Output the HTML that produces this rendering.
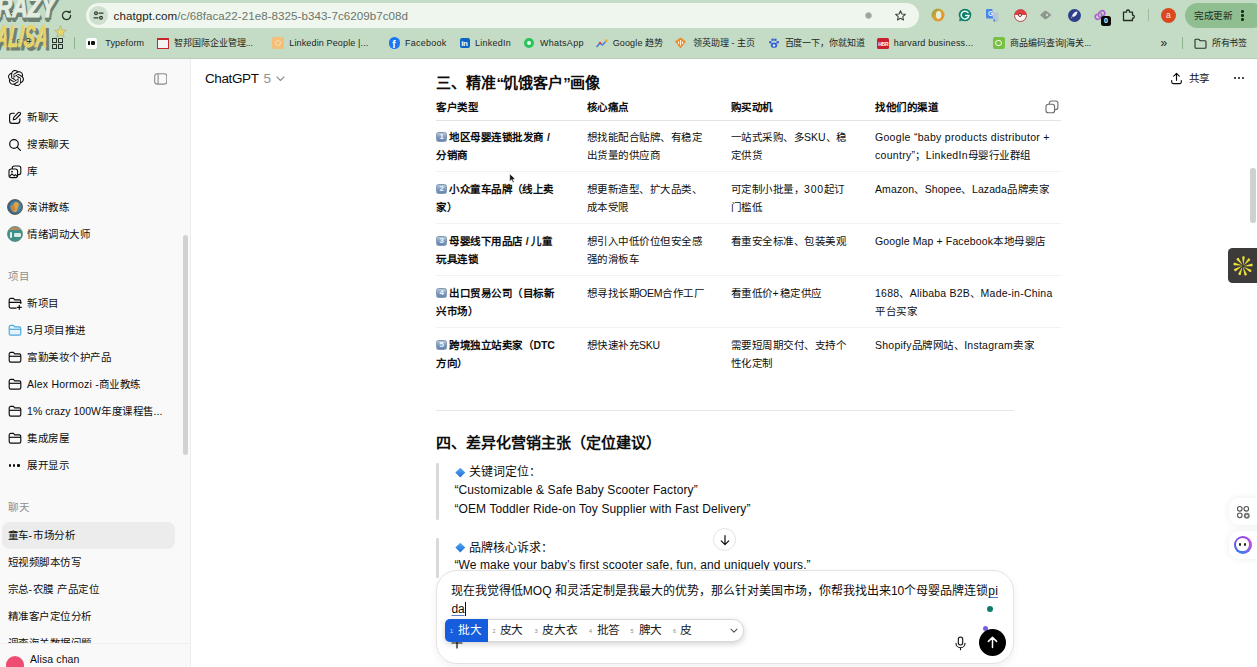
<!DOCTYPE html>
<html lang="zh-CN">
<head>
<meta charset="utf-8">
<title>ChatGPT</title>
<style>
*{box-sizing:border-box;margin:0;padding:0}
html,body{width:1257px;height:667px;overflow:hidden;background:#fff}
body{font-family:"Liberation Sans",sans-serif;color:#0d0d0d;position:relative}
.abs{position:absolute}
.t{position:absolute;white-space:nowrap;color:#0d0d0d}
#chrome{position:absolute;left:0;top:0;width:1257px;height:58.5px;background:#c4dcc5;overflow:hidden}
#chrome .edge{position:absolute;left:0;top:57.5px;width:1257px;height:1px;background:#bccdb9}
#omni{position:absolute;left:86px;top:3px;width:832.5px;height:25px;border-radius:12.5px;background:#eff6ee}
#omni .site{position:absolute;left:3px;top:3px;width:19px;height:19px;border-radius:50%;background:#cfe0ce}
.wm1{position:absolute;left:-19.5px;top:-8.5px;font-size:30px;line-height:30px;font-weight:700;font-style:italic;color:#e3eee3;-webkit-text-stroke:1.1px #e3eee3;transform-origin:0 0;transform:scaleX(.72);text-shadow:1px 1px 0 #6e8172,2px 2px 0 #6e8172,3px 3px 0 #6e8172,0 4px 0 #6e8172,1px 5px 0 #6e8172,-1px 3px 0 #6e8172;white-space:nowrap}
.wm2,.wm2s{position:absolute;left:-3px;top:21px;font-size:31px;line-height:31px;font-weight:700;font-style:italic;color:#e6d468;-webkit-text-stroke:.6px #e6d468;transform-origin:0 0;transform:scaleX(.56) skewX(-8deg);white-space:nowrap}
.wm2s{left:0px;top:24px;color:#6e8172;-webkit-text-stroke:1.2px #6e8172}
#side{position:absolute;left:0;top:58.5px;width:190.5px;height:609px;background:#f9f9f9;border-right:1px solid #ededed}
#main{position:absolute;left:190.5px;top:58.5px;width:1067px;height:609px;background:#fff}
</style>
</head>
<body>
<div id="chrome">
<svg class="abs" style="left:5px;top:9px" width="12" height="12" viewBox="0 0 12 12"><path d="M7.5 2 L3 6 L7.5 10 M3 6 H11" fill="none" stroke="#3a463a" stroke-width="1.3"/></svg>
<div class="t" style="left:15.5px;top:37.2px;font-size:9px;line-height:12px;color:#1d261e;">应用</div>
<div class="abs" style="left:5px;top:38.5px;width:9px;height:0;border-top:1.5px dashed #d6452f"></div>
<div class="wm1">CRAZY</div><div class="wm2s">ALISA</div><div class="wm2">ALISA</div>
<svg class="abs" style="left:54px;top:25px" width="13" height="13" viewBox="0 0 24 24"><path d="M12 1.5l3 7.6 8 .5-6.2 5.1 2.1 7.8L12 18.2 5.1 22.5l2.1-7.8L1 9.6l8-.5z" fill="#e6d66e" stroke="#9aa878" stroke-width="1"/></svg>
<svg class="abs" style="left:60px;top:9px" width="13" height="13" viewBox="0 0 13 13"><path d="M10.6 6.5a4.1 4.1 0 1 1-1.3-3" fill="none" stroke="#27332a" stroke-width="1.3" stroke-linecap="round"/><path d="M7.6 3.9h3.1V.9z" fill="#27332a"/></svg>
<div id="omni"><div class="site"></div><svg class="abs" style="left:7px;top:7px" width="11" height="11" viewBox="0 0 11 11"><g fill="none" stroke="#2d392f" stroke-width="1.2" stroke-linecap="round"><circle cx="3" cy="3.2" r="1.4"/><path d="M6 3.2h4"/><circle cx="8" cy="7.8" r="1.4"/><path d="M1 7.8h4"/></g></svg></div>
<div class="t" style="left:113.6px;top:8px;font-size:11.6px;line-height:15px;letter-spacing:0.05px;color:#6b756b"><span style="color:#1d261e">chatgpt.com</span>/c/68faca22-21e8-8325-b343-7c6209b7c08d</div>
<div class="abs" style="left:865px;top:11.5px;width:7px;height:7px;border-radius:50%;background:#9aa39a;border:1.5px solid #b7c2b7"></div>
<svg class="abs" style="left:894px;top:8.7px" width="13" height="13" viewBox="0 0 24 24"><path d="M12 3.2l2.600 5.9 6.4.6-4.8 4.3 1.4 6.3L12 17l-5.6 3.3 1.4-6.3L3 9.7l6.400-.6z" fill="none" stroke="#38443a" stroke-width="1.9" stroke-linejoin="round"/></svg>
<svg class="abs" style="left:931px;top:8.3px" width="14" height="14" viewBox="-7 -7 14 14"><defs><linearGradient id="og" x1="0" y1="0" x2="1" y2="1"><stop offset="0" stop-color="#7fa23c"/><stop offset=".45" stop-color="#d9a233"/><stop offset="1" stop-color="#ee8f2c"/></linearGradient></defs><circle r="6.5" fill="url(#og)"/><ellipse cx=".6" cy="0" rx="2.7" ry="3.9" fill="#e6eedd"/></svg>
<svg class="abs" style="left:958px;top:8.3px" width="14" height="14" viewBox="-7 -7 14 14"><circle r="6.3" fill="#117f69"/><path d="M-6 3.5l.6 3 2.6-1.2z" fill="#117f69"/><path d="M3 -2.5A3.900 3.9 0 1 0 3.9 .6H.6" fill="none" stroke="#eafaf4" stroke-width="1.5" stroke-linecap="round"/></svg>
<svg class="abs" style="left:985px;top:8px" width="15" height="15" viewBox="0 0 15 15"><path d="M1 2.2a1.200 1.2 0 0 1 1.2-1.2h5l1.800 9.5H2.200A1.200 1.2 0 0 1 1 9.3z" fill="#4a84ea"/><path d="M6.500 4.5h5.800a1.200 1.2 0 0 1 1.2 1.2v6.600a1.200 1.2 0 0 1-1.2 1.2H9.200z" fill="#b9c6d6"/><path d="M9 10.5l1.500 3-2.2-.2z" fill="#3a6fd0"/></svg>
<div class="t" style="left:988px;top:9.8px;font-size:6.5px;line-height:8px;font-weight:700;color:#e9f1ff">G</div>
<div class="abs" style="left:1013.5px;top:8.5px;width:13px;height:13px;border-radius:50%;background:linear-gradient(#e33d3d 0 50%,#f4f4f4 50% 100%);border:.5px solid #b44"></div>
<div class="abs" style="left:1018px;top:13px;width:4px;height:4px;border-radius:50%;background:#fff;border:.8px solid #733"></div>
<svg class="abs" style="left:1039px;top:9px" width="14" height="12" viewBox="0 0 14 12"><path d="M1 6l5-4.5 2.5 1.2L12.5 6 8.5 9.3 6 10.5z" fill="#8e978e"/><circle cx="8" cy="6" r="1.2" fill="#c4dcc5"/></svg>
<div class="abs" style="left:1067.5px;top:8.5px;width:13px;height:13px;border-radius:50%;background:#2c3f8a;"></div>
<svg class="abs" style="left:1069px;top:10px" width="10" height="10" viewBox="0 0 10 10"><path d="M8.5 1.5C6 1.6 3.8 3.2 3 6l1 1c2.8-.8 4.4-3 4.5-5.5z" fill="#eef2ff"/><path d="M2.600 6.5L1.500 8.5l2-1z" fill="#f1b13a"/></svg>
<svg class="abs" style="left:1093px;top:8px" width="14" height="14" viewBox="0 0 14 14"><g fill="none" stroke="#b05fcf" stroke-width="1.7" stroke-linecap="round"><path d="M6 8.5a2.600 2.6 0 0 1 0-3.6l1.800-1.8a2.600 2.6 0 0 1 3.6 3.6l-.8.8"/><path d="M8 5.5a2.600 2.6 0 0 1 0 3.6l-1.8 1.8a2.600 2.6 0 0 1-3.6-3.6l.8-.8"/></g></svg>
<div class="abs" style="left:1101px;top:16px;width:10px;height:10px;border-radius:2.5px;background:#0b0b0b;color:#fff;font-size:7px;line-height:10px;text-align:center;font-weight:700">0</div>
<svg class="abs" style="left:1121px;top:8px" width="14" height="14" viewBox="0 0 14 14"><path d="M2.500 4.2h3v-.7a1.500 1.5 0 0 1 3 0v.7h3v3h.3a1.500 1.5 0 0 1 0 3h-.3v2.300h-9z" fill="none" stroke="#222b23" stroke-width="1.3" stroke-linejoin="round"/></svg>
<div class="abs" style="left:1148px;top:9px;width:1px;height:12px;background:#9dbb9d"></div>
<div class="abs" style="left:1161px;top:7.5px;width:15px;height:15px;border-radius:50%;background:#d9481f;"></div>
<div class="t" style="left:1166px;top:9.5px;font-size:8.5px;line-height:10px;color:#ffe9df">a</div>
<div class="abs" style="left:1185px;top:3px;width:80px;height:25px;border-radius:12.5px;background:#8fbf90"></div>
<div class="t" style="left:1194px;top:9px;font-size:9.6px;line-height:13px;color:#1c2a1c;letter-spacing:-0.4px;">完成更新</div>
<div class="abs" style="left:1241.2px;top:10.2px;width:2.4px;height:2.4px;border-radius:50%;background:#1c2a1c"></div><div class="abs" style="left:1241.2px;top:14.3px;width:2.4px;height:2.4px;border-radius:50%;background:#1c2a1c"></div><div class="abs" style="left:1241.2px;top:18.4px;width:2.4px;height:2.4px;border-radius:50%;background:#1c2a1c"></div>
<div class="abs" style="left:52px;top:38px;width:4.5px;height:4.5px;border:1px solid #27332a;border-radius:.5px"></div><div class="abs" style="left:52px;top:44px;width:4.5px;height:4.5px;border:1px solid #27332a;border-radius:.5px"></div><div class="abs" style="left:58px;top:38px;width:4.5px;height:4.5px;border:1px solid #27332a;border-radius:.5px"></div><div class="abs" style="left:58px;top:44px;width:4.5px;height:4.5px;border:1px solid #27332a;border-radius:.5px"></div>
<div class="abs" style="left:74px;top:37px;width:1px;height:12px;background:#8db38d"></div>
<div class="abs" style="left:86px;top:37.5px;width:11px;height:11px;border-radius:2.5px;background:#fbfdfb"></div><div class="abs" style="left:88.3px;top:41px;width:1.6px;height:4px;border-radius:.6px;background:#111"></div><div class="abs" style="left:90.6px;top:41px;width:4.6px;height:4px;border-radius:1.2px;background:#111"></div>
<div class="t" style="left:105.2px;top:37.2px;font-size:9px;line-height:12px;color:#1d261e;letter-spacing:0.2px;">Typeform</div>
<div class="abs" style="left:157px;top:37.5px;width:11.5px;height:11px;border:1.6px solid #c5282a;border-top-width:2.4px;background:#f2f5f1"></div>
<div class="t" style="left:173.7px;top:37.2px;font-size:9px;line-height:12px;color:#1d261e;">智邦国际企业管理<span style="letter-spacing:-0.07px">...</span></div>
<div class="abs" style="left:272px;top:37px;width:12px;height:12px;border-radius:2px;background:#f3bf79"></div><div class="abs" style="left:275px;top:40px;width:6px;height:6px;border-radius:50%;border:1px solid #f8dcae"></div>
<div class="t" style="left:289.3px;top:37.2px;font-size:9px;line-height:12px;color:#1d261e;letter-spacing:0.14px;">Linkedin People |...</div>
<div class="abs" style="left:388.8px;top:37.4px;width:11.2px;height:11.2px;border-radius:50%;background:#1877f2;"></div>
<div class="t" style="left:392.3px;top:38.5px;font-size:10px;line-height:11px;font-weight:700;color:#fff">f</div>
<div class="t" style="left:405px;top:37.2px;font-size:9px;line-height:12px;color:#1d261e;letter-spacing:0.23px;">Facebook</div>
<div class="abs" style="left:459.6px;top:37.8px;width:10.5px;height:10.5px;border-radius:2px;background:#0a66c2"></div><div class="t" style="left:461.2px;top:39px;font-size:8px;line-height:9px;font-weight:700;color:#fff;letter-spacing:-.3px">in</div>
<div class="t" style="left:475px;top:37.2px;font-size:9px;line-height:12px;color:#1d261e;letter-spacing:0.23px;">LinkedIn</div>
<div class="abs" style="left:523.9px;top:37.7px;width:10.6px;height:10.6px;border-radius:50%;background:#27c45a;"></div>
<div class="abs" style="left:526.9px;top:40.7px;width:4.6px;height:4.6px;border-radius:50%;background:#e9f9ee;"></div>
<div class="t" style="left:540px;top:37.2px;font-size:9px;line-height:12px;color:#1d261e;letter-spacing:0.27px;">WhatsApp</div>
<svg class="abs" style="left:596px;top:37px" width="12" height="12" viewBox="0 0 12 12"><path d="M1 9.5l3-3.5 2.5 2 4-4.5" fill="none" stroke="#4a7de0" stroke-width="1.6" stroke-linecap="round"/><circle cx="4" cy="6" r="1.3" fill="#e8453c"/><circle cx="10.3" cy="3.6" r="1.3" fill="#f2b61f"/></svg>
<div class="t" style="left:612.7px;top:37.2px;font-size:9px;line-height:12px;color:#1d261e;letter-spacing:0.14px;">Google <span style="letter-spacing:0px">趋势</span></div>
<svg class="abs" style="left:674px;top:37px" width="13" height="12" viewBox="0 0 13 12"><path d="M6.500.5l5.500 4-5.5 7-5.5-7z" fill="#f08a24"/><path d="M6.500 3v5.500M4.500 4.5v2.500M8.500 4.5v2.500" stroke="#fff2dc" stroke-width="1.1"/></svg>
<div class="t" style="left:693px;top:37.2px;font-size:9px;line-height:12px;color:#1d261e;">领英助理 - 主页</div>
<svg class="abs" style="left:767.5px;top:37px" width="12" height="12" viewBox="0 0 12 12"><g fill="#3460d6"><ellipse cx="6" cy="8.2" rx="3.2" ry="2.6"/><circle cx="2.3" cy="5.2" r="1.3"/><circle cx="4.6" cy="2.8" r="1.3"/><circle cx="7.4" cy="2.8" r="1.3"/><circle cx="9.7" cy="5.2" r="1.3"/></g><circle cx="6" cy="8.4" r="1.2" fill="#e8eefc"/></svg>
<div class="t" style="left:784.5px;top:37.2px;font-size:9px;line-height:12px;color:#1d261e;letter-spacing:-0.11px;">百度一下，你就知道</div>
<div class="abs" style="left:877px;top:37.5px;width:12px;height:11px;border-radius:1.5px;background:#c8202f"></div><div class="t" style="left:878.2px;top:40.5px;font-size:5px;line-height:6px;font-weight:700;color:#fff;letter-spacing:-.2px">HBR</div>
<div class="t" style="left:893.7px;top:37.2px;font-size:9px;line-height:12px;color:#1d261e;letter-spacing:0.19px;">harvard business...</div>
<div class="abs" style="left:992.6px;top:37.3px;width:12px;height:11.5px;border-radius:2px;background:#78c043"></div><div class="abs" style="left:995px;top:39.5px;width:6.5px;height:6.5px;border-radius:50%;border:1.5px solid #f3fbe9"></div>
<div class="t" style="left:1010px;top:37.2px;font-size:9px;line-height:12px;color:#1d261e;">商品编码查询<span style="letter-spacing:-0.21px">|</span>海关<span style="letter-spacing:-0.21px">...</span></div>
<div class="t" style="left:1160.5px;top:36.5px;font-size:12px;line-height:12px;color:#1d261e;">»</div>
<div class="abs" style="left:1181.5px;top:37px;width:1px;height:12px;background:#8db38d"></div>
<svg class="abs" style="left:1193.5px;top:37.5px" width="13" height="11" viewBox="0 0 13 11"><path d="M1 2.2a1 1 0 0 1 1-1h2.800l1.300 1.5H11a1 1 0 0 1 1 1v5.600a1 1 0 0 1-1 1H2a1 1 0 0 1-1-1z" fill="none" stroke="#27332a" stroke-width="1.1"/></svg>
<div class="t" style="left:1211.6px;top:37.2px;font-size:9px;line-height:12px;color:#1d261e;letter-spacing:-0.05px;">所有书签</div>
<div class="edge"></div>
</div>
<div id="side"></div>
<svg class="abs" style="left:7.5px;top:70px" width="16" height="16" viewBox="0 0 24 24"><path d="M22.2819 9.82a5.9847 5.98 0 0 0-.5157-4.91 6.05 6.05 0 0 0-6.51-2.9A6.0651 6.07 0 0 0 4.98 4.18a5.9847 5.98 0 0 0-4 2.9 6.05 6.05 0 0 0 .7427 7.1 5.98 5.98 0 0 0 .511 4.91 6.05 6.05 0 0 0 6.51 2.9A5.9847 5.98 0 0 0 13.26 24a6.0557 6.06 0 0 0 5.77-4.21 5.99 5.99 0 0 0 4-2.9 6.06 6.06 0 0 0-.7475-7.07zm-9.02 12.61a4.4755 4.48 0 0 1-2.88-1.04l.1419-.0804 4.78-2.76a.7948.79 0 0 0 .3927-.6813v-6.74l2.02 1.17a.71.07 0 0 1 .38.05v5.5826a4.504 4.5 0 0 1-4.49 4.49zm-9.66-4.13a4.4708 4.47 0 0 1-.5346-3.01l.142.09 4.78 2.76a.7712.77 0 0 0 .7806 0l5.8428-3.37v2.3324a.804.08 0 0 1-.332.06L9.74 19.95a4.4992 4.5 0 0 1-6.14-1.65zM2.3408 7.9a4.485 4.49 0 0 1 2.37-1.97V11.6a.7664.77 0 0 0 .3879.68l5.8144 3.35-2.02 1.17a.757.08 0 0 1-.071 0l-4.83-2.79A4.504 4.5 0 0 1 2.34 7.87zm16.5963 3.86L13.1038 8.36 15.12 7.2a.757.08 0 0 1 .071 0l4.8303 2.79a4.4944 4.49 0 0 1-.6765 8.1v-5.68a.79.79 0 0 0-.407-.667zm2.0107-3.02l-.142-.0852-4.77-2.78a.7759.78 0 0 0-.7854 0L9.409 9.23V6.8974a.662.07 0 0 1 .0284-.0615l4.8303-2.79a4.4992 4.5 0 0 1 6.68 4.66zM8.3065 12.86l-2.02-1.16a.804.08 0 0 1-.038-.0567V6.0742a4.4992 4.5 0 0 1 7.38-3.45l-.142.08L8.704 5.46a.7948.79 0 0 0-.3927.68zm1.0976-2.37l2.602-1.5 2.61 1.5v2.9994l-2.6 1.5-2.61-1.5Z" fill="#0d0d0d"/></svg>
<svg class="abs" style="left:153.5px;top:72.5px" width="13.5" height="12" viewBox="0 0 13.5 12"><rect x=".7" y=".7" width="12.1" height="10.4" rx="2.6" fill="none" stroke="#8a8a8a" stroke-width="1.1"/><path d="M4.100 .7v10.400" stroke="#8a8a8a" stroke-width="1.1"/></svg>
<svg class="abs" style="left:8px;top:110.6px" width="14" height="14" viewBox="0 0 14 14"><g fill="none" stroke="#0d0d0d" stroke-width="1.15" stroke-linecap="round" stroke-linejoin="round"><path d="M6.300 2.2H4.200a2.600 2.6 0 0 0-2.6 2.6v5a2.600 2.6 0 0 0 2.6 2.6h5a2.600 2.6 0 0 0 2.6-2.6V7.700"/><path d="M10.300 1.7a1.250 1.25 0 0 1 1.9 1.8L7.600 8.2l-2.3.6.5-2.4z"/></g></svg>
<div class="t" style="left:27px;top:110px;font-size:10.5px;line-height:15px;letter-spacing:0.5px;">新聊天</div>
<svg class="abs" style="left:8px;top:138px" width="14" height="14" viewBox="0 0 14 14"><g fill="none" stroke="#0d0d0d" stroke-width="1.2" stroke-linecap="round"><circle cx="6" cy="6" r="4.3"/><path d="M9.200 9.2l3.200 3.2"/></g></svg>
<div class="t" style="left:27px;top:137.1px;font-size:10.5px;line-height:15px;letter-spacing:0.5px;">搜索聊天</div>
<svg class="abs" style="left:8px;top:164.8px" width="14" height="14" viewBox="0 0 14 14"><g fill="none" stroke="#0d0d0d" stroke-width="1.1" stroke-linejoin="round"><rect x="1" y="4" width="8.6" height="8.6" rx="2.2"/><path d="M4.200 4V3.200A2.200 2.2 0 0 1 6.4 1h4.200a2.200 2.2 0 0 1 2.2 2.2v4.200a2.200 2.2 0 0 1-2.2 2.2H9.700"/><path d="M1.600 11.3l2.400-2.5 2.2 2 1.3-1.2 1.7 1.7"/></g><circle cx="4" cy="6.7" r=".9" fill="#0d0d0d"/></svg>
<div class="t" style="left:27px;top:164.1px;font-size:10.5px;line-height:15px;letter-spacing:0.5px;">库</div>
<div class="abs" style="left:7px;top:199px;width:16px;height:16px;border-radius:50%;background:radial-gradient(circle at 55% 50%,#4a86b0 0 45%,#2f5f84 70%);border:1px solid #6a5a4a"></div><div class="abs" style="left:13px;top:202px;width:5px;height:10px;border-radius:2.5px;background:#e2a53c;transform:rotate(18deg)"></div><div class="abs" style="left:10.5px;top:205px;width:4px;height:6px;border-radius:2px;background:#c9853a;transform:rotate(-25deg)"></div>
<div class="t" style="left:27px;top:199.5px;font-size:10.5px;line-height:15px;letter-spacing:0.5px;">演讲教练</div>
<div class="abs" style="left:7px;top:226px;width:16px;height:16px;border-radius:50%;background:linear-gradient(#b98a5a 0 22%,#3f908a 23% 100%);border:1px solid #5f8f8a"></div><div class="abs" style="left:14px;top:232.5px;width:6.5px;height:4.5px;border-radius:1.2px;background:#d9ece4"></div><div class="abs" style="left:10px;top:231.5px;width:2px;height:6px;border-radius:1px;background:#e6f2ec"></div>
<div class="t" style="left:27px;top:226.5px;font-size:10.5px;line-height:15px;letter-spacing:0.5px;">情绪调动大师</div>
<div class="abs" style="left:183px;top:235px;width:5px;height:220px;border-radius:2.5px;background:#d2d2d2"></div>
<div class="t" style="left:8px;top:268.5px;font-size:10.5px;line-height:15px;color:#8f8f8f;letter-spacing:0.5px;">项目</div>
<svg class="abs" style="left:7.5px;top:297px" width="14" height="13" viewBox="0 0 14 13"><path d="M12.800 6.5V4.500a1.600 1.6 0 0 0-1.6-1.6H6.700L5.400 1.4H2.800A1.600 1.6 0 0 0 1.2 3v6.500a1.600 1.6 0 0 0 1.6 1.6h5.400" fill="none" stroke="#0d0d0d" stroke-width="1.15" stroke-linejoin="round" stroke-linecap="round"/><path d="M1.200 5.3h11.600M11.300 8.3v4M9.300 10.3h4" stroke="#0d0d0d" stroke-width="1.15" stroke-linecap="round"/></svg>
<div class="t" style="left:27px;top:296px;font-size:10.5px;line-height:15px;letter-spacing:0.5px;">新项目</div>
<svg class="abs" style="left:7.5px;top:324px" width="14" height="13" viewBox="0 0 14 13"><path d="M1.2 3a1.6 1.6 0 0 1 1.6-1.6h2.600l1.300 1.5h4.500a1.600 1.6 0 0 1 1.6 1.6v5a1.600 1.6 0 0 1-1.6 1.6H2.800a1.600 1.6 0 0 1-1.6-1.6z" fill="#e4f3fc" stroke="#4aa8e0" stroke-width="1.15" stroke-linejoin="round"/><path d="M1.200 5.3h11.600" stroke="#4aa8e0" stroke-width="1.15"/></svg>
<div class="t" style="left:27px;top:323px;font-size:10.5px;line-height:15px;letter-spacing:0.5px;"><span style="letter-spacing:0.16px">5</span>月项目推进</div>
<svg class="abs" style="left:7.5px;top:351px" width="14" height="13" viewBox="0 0 14 13"><path d="M1.2 3a1.6 1.6 0 0 1 1.6-1.6h2.600l1.300 1.5h4.500a1.600 1.6 0 0 1 1.6 1.6v5a1.600 1.6 0 0 1-1.6 1.6H2.800a1.600 1.6 0 0 1-1.6-1.6z" fill="none" stroke="#0d0d0d" stroke-width="1.15" stroke-linejoin="round"/><path d="M1.200 5.3h11.600" stroke="#0d0d0d" stroke-width="1.15"/></svg>
<div class="t" style="left:27px;top:350px;font-size:10.5px;line-height:15px;letter-spacing:0.5px;">富勤美妆个护产品</div>
<svg class="abs" style="left:7.5px;top:378px" width="14" height="13" viewBox="0 0 14 13"><path d="M1.2 3a1.6 1.6 0 0 1 1.6-1.6h2.600l1.300 1.5h4.500a1.600 1.6 0 0 1 1.6 1.6v5a1.600 1.6 0 0 1-1.6 1.6H2.800a1.600 1.6 0 0 1-1.6-1.6z" fill="none" stroke="#0d0d0d" stroke-width="1.15" stroke-linejoin="round"/><path d="M1.200 5.3h11.600" stroke="#0d0d0d" stroke-width="1.15"/></svg>
<div class="t" style="left:27px;top:377px;font-size:10.5px;line-height:15px;letter-spacing:0.22px;">Alex Hormozi -<span style="letter-spacing:0.5px">商业教练</span></div>
<svg class="abs" style="left:7.5px;top:405px" width="14" height="13" viewBox="0 0 14 13"><path d="M1.2 3a1.6 1.6 0 0 1 1.6-1.6h2.600l1.300 1.5h4.500a1.600 1.6 0 0 1 1.6 1.6v5a1.600 1.6 0 0 1-1.6 1.6H2.800a1.600 1.6 0 0 1-1.6-1.6z" fill="none" stroke="#0d0d0d" stroke-width="1.15" stroke-linejoin="round"/><path d="M1.200 5.3h11.600" stroke="#0d0d0d" stroke-width="1.15"/></svg>
<div class="t" style="left:27px;top:404px;font-size:10.5px;line-height:15px;letter-spacing:0.04px;">1% crazy 100W<span style="letter-spacing:0.5px">年度课程售</span>...</div>
<svg class="abs" style="left:7.5px;top:432px" width="14" height="13" viewBox="0 0 14 13"><path d="M1.2 3a1.6 1.6 0 0 1 1.6-1.6h2.600l1.300 1.5h4.500a1.600 1.6 0 0 1 1.6 1.6v5a1.600 1.6 0 0 1-1.6 1.6H2.800a1.600 1.6 0 0 1-1.6-1.6z" fill="none" stroke="#0d0d0d" stroke-width="1.15" stroke-linejoin="round"/><path d="M1.200 5.3h11.600" stroke="#0d0d0d" stroke-width="1.15"/></svg>
<div class="t" style="left:27px;top:431px;font-size:10.5px;line-height:15px;letter-spacing:0.5px;">集成房屋</div>
<div class="abs" style="left:9px;top:464.4px;width:2.2px;height:2.2px;border-radius:50%;background:#0d0d0d"></div><div class="abs" style="left:13.2px;top:464.4px;width:2.2px;height:2.2px;border-radius:50%;background:#0d0d0d"></div><div class="abs" style="left:17.4px;top:464.4px;width:2.2px;height:2.2px;border-radius:50%;background:#0d0d0d"></div>
<div class="t" style="left:27px;top:458px;font-size:10.5px;line-height:15px;letter-spacing:0.5px;">展开显示</div>
<div class="t" style="left:8px;top:500px;font-size:10.5px;line-height:15px;color:#8f8f8f;letter-spacing:0.5px;">聊天</div>
<div class="abs" style="left:1.5px;top:521.5px;width:173.5px;height:27px;border-radius:7.5px;background:#ececec"></div>
<div class="t" style="left:7.5px;top:527.5px;font-size:10.5px;line-height:15px;letter-spacing:0.5px;">童车<span style="letter-spacing:1px">-</span>市场分析</div>
<div class="t" style="left:7.5px;top:554.5px;font-size:10.5px;line-height:15px;letter-spacing:0.5px;">短视频脚本仿写</div>
<div class="t" style="left:7.5px;top:581.5px;font-size:10.5px;line-height:15px;letter-spacing:0.5px;">宗总<span style="letter-spacing:0.54px">-</span>农膜<span style="letter-spacing:0.54px"> </span>产品定位</div>
<div class="t" style="left:7.5px;top:608.5px;font-size:10.5px;line-height:15px;letter-spacing:0.5px;">精准客户定位分析</div>
<div class="t" style="left:7.5px;top:635.5px;font-size:10.5px;line-height:15px;letter-spacing:0.5px;">调查海关数据问题</div>
<div class="abs" style="left:0;top:642.5px;width:190px;height:25px;background:#f9f9f9;border-top:1px solid #efefef"></div>
<div class="abs" style="left:6px;top:656px;width:18px;height:18px;border-radius:50%;background:#ee4d72"></div>
<div class="t" style="left:30px;top:652px;font-size:10.5px;line-height:15px;letter-spacing:0.1px;">Alisa chan</div>
<div id="main"></div>
<div class="t" style="left:204.9px;top:69px;font-size:13.5px;line-height:19px;color:#0d0d0d;letter-spacing:-0.37px;">ChatGPT</div>
<div class="t" style="left:263.5px;top:69px;font-size:13.5px;line-height:19px;color:#8f8f8f;">5</div>
<svg class="abs" style="left:275.5px;top:76px" width="9" height="6" viewBox="0 0 9 6"><path d="M1 1l3.500 3.5L8 1" fill="none" stroke="#8f8f8f" stroke-width="1.1" stroke-linecap="round" stroke-linejoin="round"/></svg>
<svg class="abs" style="left:1170px;top:71.5px" width="13" height="13" viewBox="0 0 13 13"><g fill="none" stroke="#0d0d0d" stroke-width="1.15" stroke-linecap="round" stroke-linejoin="round"><path d="M6.500 8.3V1.500M3.700 4.1l2.800-2.7 2.8 2.7M1.700 8.5v1.600a1.500 1.5 0 0 0 1.5 1.5h6.600a1.500 1.5 0 0 0 1.5-1.5V8.500"/></g></svg>
<div class="t" style="left:1188.6px;top:71px;font-size:10.5px;line-height:15px;letter-spacing:0.5px;">共享</div>
<div class="abs" style="left:1233.6px;top:77.2px;width:2.3px;height:2.3px;border-radius:50%;background:#0d0d0d"></div><div class="abs" style="left:1237.9px;top:77.2px;width:2.3px;height:2.3px;border-radius:50%;background:#0d0d0d"></div><div class="abs" style="left:1242.2px;top:77.2px;width:2.3px;height:2.3px;border-radius:50%;background:#0d0d0d"></div>
<div class="t" style="left:436.4px;top:72.7px;font-size:15px;line-height:20px;font-weight:700;">三、精准<span style="letter-spacing:-0.55px">“</span>饥饿客户<span style="letter-spacing:-0.55px">”</span>画像</div>
<div class="t" style="left:436.4px;top:100.2px;font-size:10.5px;line-height:15px;font-weight:700;letter-spacing:0.5px;">客户类型</div>
<div class="t" style="left:586.6px;top:100.2px;font-size:10.5px;line-height:15px;font-weight:700;letter-spacing:0.5px;">核心痛点</div>
<div class="t" style="left:730.5px;top:100.2px;font-size:10.5px;line-height:15px;font-weight:700;letter-spacing:0.5px;">购买动机</div>
<div class="t" style="left:875px;top:100.2px;font-size:10.5px;line-height:15px;font-weight:700;letter-spacing:0.5px;">找他们的渠道</div>
<svg class="abs" style="left:1044.5px;top:100px" width="14" height="14" viewBox="0 0 14 14"><g fill="none" stroke="#6b6b6b" stroke-width="1.1" stroke-linejoin="round"><rect x="1" y="4.2" width="8.6" height="8.6" rx="2.3"/><path d="M4.300 4.2V3.300A2.300 2.3 0 0 1 6.6 1h4a2.300 2.3 0 0 1 2.3 2.3v4a2.300 2.3 0 0 1-2.3 2.3H9.700"/></g></svg>
<div class="abs" style="left:436px;top:119.6px;width:625px;height:1px;background:#e4e4e4"></div>
<div class="abs" style="left:436px;top:171.3px;width:625px;height:1px;background:#f2f2f2"></div>
<div class="abs" style="left:436px;top:223.3px;width:625px;height:1px;background:#f2f2f2"></div>
<div class="abs" style="left:436px;top:275.3px;width:625px;height:1px;background:#f2f2f2"></div>
<div class="abs" style="left:436px;top:327.3px;width:625px;height:1px;background:#f2f2f2"></div>
<div class="abs" style="left:436.4px;top:131.6px;width:10.6px;height:10.8px;border-radius:2.4px;background:linear-gradient(#b4c8dd,#7b98bd 55%,#6685ad);border:.5px solid #8299b6"></div><div class="t" style="left:439.5px;top:133px;font-size:7.8px;line-height:8px;font-weight:700;color:#f4f8fc">1</div>
<div class="t" style="left:449.4px;top:129.7px;font-size:10.5px;line-height:15px;font-weight:700;letter-spacing:0.5px;">地区母婴连锁批发商<span style="letter-spacing:0.23px"> /</span></div>
<div class="t" style="left:436.4px;top:147.7px;font-size:10.5px;line-height:15px;font-weight:700;letter-spacing:0.5px;">分销商</div>
<div class="t" style="left:586.6px;top:129.7px;font-size:10.5px;line-height:15px;letter-spacing:0.5px;">想找能配合贴牌、有稳定</div>
<div class="t" style="left:586.6px;top:147.7px;font-size:10.5px;line-height:15px;letter-spacing:0.5px;">出货量的供应商</div>
<div class="t" style="left:730.5px;top:129.7px;font-size:10.5px;line-height:15px;letter-spacing:0.5px;">一站式采购、多<span style="letter-spacing:0.04px">SKU</span>、稳</div>
<div class="t" style="left:730.5px;top:147.7px;font-size:10.5px;line-height:15px;letter-spacing:0.5px;">定供货</div>
<div class="t" style="left:875px;top:129.7px;font-size:10.5px;line-height:15px;letter-spacing:0.3px;">Google “baby products distributor +</div>
<div class="t" style="left:875px;top:147.7px;font-size:10.5px;line-height:15px;letter-spacing:0.29px;">country”<span style="letter-spacing:0.5px">；</span>LinkedIn<span style="letter-spacing:0.5px">母婴行业群组</span></div>
<div class="abs" style="left:436.4px;top:183.6px;width:10.6px;height:10.8px;border-radius:2.4px;background:linear-gradient(#b4c8dd,#7b98bd 55%,#6685ad);border:.5px solid #8299b6"></div><div class="t" style="left:439.5px;top:185px;font-size:7.8px;line-height:8px;font-weight:700;color:#f4f8fc">2</div>
<div class="t" style="left:449.4px;top:181.7px;font-size:10.5px;line-height:15px;font-weight:700;letter-spacing:0.43px;">小众童车品牌（线上卖</div>
<div class="t" style="left:436.4px;top:199.7px;font-size:10.5px;line-height:15px;font-weight:700;letter-spacing:0.5px;">家）</div>
<div class="t" style="left:586.6px;top:181.7px;font-size:10.5px;line-height:15px;letter-spacing:0.5px;">想更新造型、扩大品类、</div>
<div class="t" style="left:586.6px;top:199.7px;font-size:10.5px;line-height:15px;letter-spacing:0.5px;">成本受限</div>
<div class="t" style="left:730.5px;top:181.7px;font-size:10.5px;line-height:15px;letter-spacing:0.5px;">可定制小批量，<span style="letter-spacing:0.82px">300</span>起订</div>
<div class="t" style="left:730.5px;top:199.7px;font-size:10.5px;line-height:15px;letter-spacing:0.5px;">门槛低</div>
<div class="t" style="left:875px;top:181.7px;font-size:10.5px;line-height:15px;letter-spacing:0.1px;">Amazon<span style="letter-spacing:0.5px">、</span>Shopee<span style="letter-spacing:0.5px">、</span>Lazada<span style="letter-spacing:0.5px">品牌卖家</span></div>
<div class="abs" style="left:436.4px;top:235.6px;width:10.6px;height:10.8px;border-radius:2.4px;background:linear-gradient(#b4c8dd,#7b98bd 55%,#6685ad);border:.5px solid #8299b6"></div><div class="t" style="left:439.5px;top:237px;font-size:7.8px;line-height:8px;font-weight:700;color:#f4f8fc">3</div>
<div class="t" style="left:449.4px;top:233.7px;font-size:10.5px;line-height:15px;font-weight:700;letter-spacing:0.5px;">母婴线下用品店<span style="letter-spacing:-0.12px"> / </span>儿童</div>
<div class="t" style="left:436.4px;top:251.7px;font-size:10.5px;line-height:15px;font-weight:700;letter-spacing:0.5px;">玩具连锁</div>
<div class="t" style="left:586.6px;top:233.7px;font-size:10.5px;line-height:15px;letter-spacing:0.5px;">想引入中低价位但安全感</div>
<div class="t" style="left:586.6px;top:251.7px;font-size:10.5px;line-height:15px;letter-spacing:0.5px;">强的滑板车</div>
<div class="t" style="left:730.5px;top:233.7px;font-size:10.5px;line-height:15px;letter-spacing:0.5px;">看重安全标准、包装美观</div>
<div class="t" style="left:875px;top:233.7px;font-size:10.5px;line-height:15px;letter-spacing:0.13px;">Google Map + Facebook<span style="letter-spacing:0.5px">本地母婴店</span></div>
<div class="abs" style="left:436.4px;top:287.6px;width:10.6px;height:10.8px;border-radius:2.4px;background:linear-gradient(#b4c8dd,#7b98bd 55%,#6685ad);border:.5px solid #8299b6"></div><div class="t" style="left:439.5px;top:289px;font-size:7.8px;line-height:8px;font-weight:700;color:#f4f8fc">4</div>
<div class="t" style="left:449.4px;top:285.7px;font-size:10.5px;line-height:15px;font-weight:700;letter-spacing:0.46px;">出口贸易公司（目标新</div>
<div class="t" style="left:436.4px;top:303.7px;font-size:10.5px;line-height:15px;font-weight:700;letter-spacing:0.5px;">兴市场）</div>
<div class="t" style="left:586.6px;top:285.7px;font-size:10.5px;line-height:15px;letter-spacing:0.5px;">想寻找长期<span style="letter-spacing:-0.27px">OEM</span>合作工厂</div>
<div class="t" style="left:730.5px;top:285.7px;font-size:10.5px;line-height:15px;letter-spacing:0.5px;">看重低价<span style="letter-spacing:0.86px">+</span>稳定供应</div>
<div class="t" style="left:875px;top:285.7px;font-size:10.5px;line-height:15px;letter-spacing:0.23px;">1688<span style="letter-spacing:0.5px">、</span>Alibaba B2B<span style="letter-spacing:0.5px">、</span>Made-in-China</div>
<div class="t" style="left:875px;top:303.7px;font-size:10.5px;line-height:15px;letter-spacing:0.5px;">平台买家</div>
<div class="abs" style="left:436.4px;top:339.6px;width:10.6px;height:10.8px;border-radius:2.4px;background:linear-gradient(#b4c8dd,#7b98bd 55%,#6685ad);border:.5px solid #8299b6"></div><div class="t" style="left:439.5px;top:341px;font-size:7.8px;line-height:8px;font-weight:700;color:#f4f8fc">5</div>
<div class="t" style="left:449.4px;top:337.7px;font-size:10.5px;line-height:15px;font-weight:700;letter-spacing:0.5px;">跨境独立站卖家（<span style="letter-spacing:-0.06px">DTC</span></div>
<div class="t" style="left:436.4px;top:355.7px;font-size:10.5px;line-height:15px;font-weight:700;letter-spacing:0.5px;">方向）</div>
<div class="t" style="left:586.6px;top:337.7px;font-size:10.5px;line-height:15px;letter-spacing:0.5px;">想快速补充<span style="letter-spacing:-0.3px">SKU</span></div>
<div class="t" style="left:730.5px;top:337.7px;font-size:10.5px;line-height:15px;letter-spacing:0.5px;">需要短周期交付、支持个</div>
<div class="t" style="left:730.5px;top:355.7px;font-size:10.5px;line-height:15px;letter-spacing:0.5px;">性化定制</div>
<div class="t" style="left:875px;top:337.7px;font-size:10.5px;line-height:15px;letter-spacing:0.24px;">Shopify<span style="letter-spacing:0.5px">品牌网站、</span>Instagram<span style="letter-spacing:0.5px">卖家</span></div>
<div class="abs" style="left:436px;top:410.2px;width:577.5px;height:1px;background:#e6e6e6"></div>
<div class="t" style="left:436.4px;top:433.3px;font-size:15px;line-height:20px;font-weight:700;">四、差异化营销主张（定位建议）</div>
<div class="abs" style="left:436px;top:462.5px;width:2.6px;height:57px;border-radius:1.3px;background:#d9d9d9"></div>
<div class="abs" style="left:436px;top:537.8px;width:2.6px;height:40px;border-radius:1.3px;background:#d9d9d9"></div>
<div class="abs" style="left:456.9px;top:468.7px;width:6.6px;height:6.6px;transform:rotate(45deg);background:linear-gradient(135deg,#5aa8f0,#1a6fd6)"></div>
<div class="t" style="left:469.3px;top:463.4px;font-size:12px;line-height:18px;">关键词定位：</div>
<div class="t" style="left:454.4px;top:481.1px;font-size:12px;line-height:18px;letter-spacing:0.11px;">“Customizable &amp; Safe Baby Scooter Factory”</div>
<div class="t" style="left:454.4px;top:499.5px;font-size:12px;line-height:18px;letter-spacing:0.11px;">“OEM Toddler Ride-on Toy Supplier with Fast Delivery”</div>
<div class="abs" style="left:456.9px;top:543.7px;width:6.6px;height:6.6px;transform:rotate(45deg);background:linear-gradient(135deg,#5aa8f0,#1a6fd6)"></div>
<div class="t" style="left:469.3px;top:538.5px;font-size:12px;line-height:18px;">品牌核心诉求：</div>
<div class="t" style="left:454.4px;top:556px;font-size:12px;line-height:18px;letter-spacing:0.12px;">“We make your baby’s first scooter safe, fun, and uniquely yours.”</div>
<div class="abs" style="left:435.5px;top:570px;width:578.5px;height:94px;border-radius:21px;background:#fff;border:1px solid #e3e3e3;box-shadow:0 3px 10px rgba(0,0,0,.06)"></div>
<div class="abs" style="left:713px;top:528px;width:23px;height:23px;border-radius:50%;background:#fff;border:1px solid #e3e3e3"></div>
<svg class="abs" style="left:718.5px;top:533.5px" width="12" height="12" viewBox="0 0 12 12"><path d="M6 1.5v9M2.300 6.9L6 10.6l3.700-3.7" fill="none" stroke="#0d0d0d" stroke-width="1.2" stroke-linecap="round" stroke-linejoin="round"/></svg>
<div class="t" style="left:450.8px;top:582px;font-size:12px;line-height:18px;">现在我觉得低<span style="letter-spacing:0.02px">MOQ </span>和灵活定制是我最大的优势，那么针对美国市场，你帮我找出来<span style="letter-spacing:0.02px">10</span>个母婴品牌连锁</div>
<div class="t" style="left:988.3px;top:582px;font-size:12px;line-height:18px;letter-spacing:0.18px;text-decoration:underline;text-decoration-thickness:1px;text-underline-offset:2px;text-decoration-color:#5a7bd8;">pi</div>
<div class="t" style="left:451.5px;top:600px;font-size:12px;line-height:18px;letter-spacing:-0.23px;text-decoration:underline;text-decoration-thickness:1px;text-underline-offset:2px;text-decoration-color:#5a7bd8;">da</div>
<div class="abs" style="left:465px;top:602px;width:1px;height:14px;background:#0d0d0d"></div>
<svg class="abs" style="left:451px;top:637px" width="12" height="12" viewBox="0 0 12 12"><path d="M6 1v10M1 6h10" stroke="#0d0d0d" stroke-width="1.2" stroke-linecap="round"/></svg>
<svg class="abs" style="left:954px;top:636px" width="13" height="15" viewBox="0 0 13 15"><g fill="none" stroke="#0d0d0d" stroke-width="1.1" stroke-linecap="round"><rect x="4.3" y="1" width="4.4" height="8" rx="2.2"/><path d="M2 7.2a4.500 4.5 0 0 0 9 0M6.500 11.7v2"/></g></svg>
<div class="abs" style="left:982.7px;top:625.5px;width:5px;height:5px;border-radius:50%;background:#7b5be6"></div>
<div class="abs" style="left:978.8px;top:628.9px;width:27.4px;height:27.4px;border-radius:50%;background:#000"></div>
<svg class="abs" style="left:986px;top:636px" width="13" height="13" viewBox="0 0 13 13"><path d="M6.500 11.5v-10M2.400 5.4l4.100-4 4.1 4" fill="none" stroke="#fff" stroke-width="1.5" stroke-linecap="round" stroke-linejoin="round"/></svg>
<div class="abs" style="left:987.4px;top:605.9px;width:6px;height:6px;border-radius:50%;background:#0f7b6c"></div>
<div class="abs" style="left:445.2px;top:619px;width:299px;height:22.5px;border-radius:5px 11px 11px 5px;background:#fff;border:.5px solid #d8d8d8;box-shadow:0 2px 6px rgba(0,0,0,.18)"></div>
<div class="abs" style="left:445.2px;top:619px;width:42.6px;height:22.5px;border-radius:5px 0 0 5px;background:#155ddc"></div>
<div class="t" style="left:450px;top:626.8px;font-size:5.5px;line-height:8px;color:#cfe0ff;">1</div>
<div class="t" style="left:458px;top:622.2px;font-size:11.7px;line-height:16px;color:#fff;letter-spacing:-0.3px;">批大</div>
<div class="t" style="left:492.5px;top:626.8px;font-size:5.5px;line-height:8px;color:#8a8a8a;">2</div>
<div class="t" style="left:499.6px;top:622.2px;font-size:11.7px;line-height:16px;color:#1a1a1a;letter-spacing:-0.3px;">皮大</div>
<div class="t" style="left:534.5px;top:626.8px;font-size:5.5px;line-height:8px;color:#8a8a8a;">3</div>
<div class="t" style="left:542.2px;top:622.2px;font-size:11.7px;line-height:16px;color:#1a1a1a;letter-spacing:-0.3px;">皮大衣</div>
<div class="t" style="left:588.9px;top:626.8px;font-size:5.5px;line-height:8px;color:#8a8a8a;">4</div>
<div class="t" style="left:596.7px;top:622.2px;font-size:11.7px;line-height:16px;color:#1a1a1a;letter-spacing:-0.3px;">批答</div>
<div class="t" style="left:630.5px;top:626.8px;font-size:5.5px;line-height:8px;color:#8a8a8a;">5</div>
<div class="t" style="left:638.5px;top:622.2px;font-size:11.7px;line-height:16px;color:#1a1a1a;letter-spacing:-0.3px;">脾大</div>
<div class="t" style="left:672.9px;top:626.8px;font-size:5.5px;line-height:8px;color:#8a8a8a;">6</div>
<div class="t" style="left:680.4px;top:622.2px;font-size:11.7px;line-height:16px;color:#1a1a1a;letter-spacing:-0.3px;">皮</div>
<svg class="abs" style="left:729.5px;top:627.5px" width="8" height="6" viewBox="0 0 8 6"><path d="M1 1.2l3 3 3-3" fill="none" stroke="#555" stroke-width="1.1" stroke-linecap="round" stroke-linejoin="round"/></svg>
<div class="abs" style="left:1250.4px;top:167.5px;width:5.3px;height:55px;border-radius:2.7px;background:#d0d0d0"></div>
<div class="abs" style="left:1228.3px;top:247.7px;width:40px;height:35.8px;border-radius:4.5px;background:#3d3a3a"></div>
<svg class="abs" style="left:1232.2px;top:254.8px" width="22" height="22" viewBox="-11 -11 22 22"><g fill="#eee23a"><path d="M.3 -.8L-1.2 -9.3Q.1 -10.3 1.5 -9.3Z" transform="rotate(2)"/><path d="M.3 -.8L-1.2 -9.3Q.1 -10.3 1.5 -9.3Z" transform="rotate(42)"/><path d="M.3 -.8L-1.2 -9.3Q.1 -10.3 1.5 -9.3Z" transform="rotate(82)"/><path d="M.3 -.8L-1.2 -9.3Q.1 -10.3 1.5 -9.3Z" transform="rotate(122)"/><path d="M.3 -.8L-1.2 -9.3Q.1 -10.3 1.5 -9.3Z" transform="rotate(162)"/><path d="M.3 -.8L-1.2 -9.3Q.1 -10.3 1.5 -9.3Z" transform="rotate(202)"/><path d="M.3 -.8L-1.2 -9.3Q.1 -10.3 1.5 -9.3Z" transform="rotate(242)"/><path d="M.3 -.8L-1.2 -9.3Q.1 -10.3 1.5 -9.3Z" transform="rotate(282)"/><path d="M.3 -.8L-1.2 -9.3Q.1 -10.3 1.5 -9.3Z" transform="rotate(322)"/></g></svg>
<div class="abs" style="left:1229px;top:498px;width:40px;height:27px;border-radius:10px;background:#fff;box-shadow:0 0 9px rgba(0,0,0,.07)"></div>
<svg class="abs" style="left:1235.5px;top:504.5px" width="15" height="15" viewBox="0 0 15 15"><g fill="none" stroke="#555" stroke-width="1.1"><circle cx="3.8" cy="3.8" r="2.3"/><circle cx="10.3" cy="3.8" r="2.3"/><circle cx="3.8" cy="10.3" r="2.3"/></g><circle cx="10.8" cy="10.8" r="3" fill="#777"/><circle cx="10.8" cy="10.8" r="1.1" fill="#fff"/></svg>
<div class="abs" style="left:1229px;top:530.5px;width:40px;height:28px;border-radius:10px;background:#fff;box-shadow:0 0 9px rgba(0,0,0,.07)"></div>
<div class="abs" style="left:1233.5px;top:535.5px;width:18px;height:18px;border-radius:50%;background:conic-gradient(from 200deg,#3a7df0,#7a3fe8,#c04fd8,#3a7df0)"></div><div class="abs" style="left:1236.2px;top:538.2px;width:12.6px;height:12.6px;border-radius:50%;background:#fff"></div><div class="abs" style="left:1238.7px;top:543px;width:2.2px;height:3.2px;border-radius:1px;background:#222"></div><div class="abs" style="left:1244px;top:543px;width:2.2px;height:3.2px;border-radius:1px;background:#222"></div>
<svg class="abs" style="left:508.7px;top:172.8px" width="7.3" height="11" viewBox="0 0 10 15"><path d="M1 1v10.500l2.600-2.3 1.8 4 1.7-.8-1.8-3.9h3.500z" fill="#111" stroke="#fff" stroke-width=".8" stroke-linejoin="round"/></svg>
</body>
</html>
